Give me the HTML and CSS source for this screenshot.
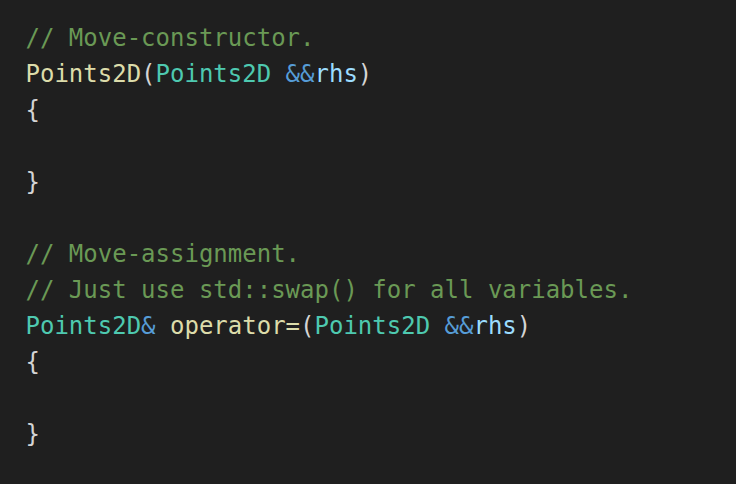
FILE: index.html
```html
<!DOCTYPE html>
<html>
<head>
<meta charset="utf-8">
<link rel="stylesheet" href="styles.css">
</head>
<body>
<pre class="code"><span class="cm">// Move-constructor.</span>
<span class="fn">Points2D</span><span class="pn">(</span><span class="ty">Points2D</span> <span class="kw">&amp;&amp;</span><span class="var">rhs</span><span class="pn">)</span>
<span class="pn">{</span>

<span class="pn">}</span>

<span class="cm">// Move-assignment.</span>
<span class="cm">// Just use std::swap() for all variables.</span>
<span class="ty">Points2D</span><span class="kw">&amp;</span> <span class="fn">operator=</span><span class="pn">(</span><span class="ty">Points2D</span> <span class="kw">&amp;&amp;</span><span class="var">rhs</span><span class="pn">)</span>
<span class="pn">{</span>

<span class="pn">}</span></pre>
</body>
</html>
```
FILE: styles.css
```css
html, body {
  margin: 0;
  padding: 0;
  background: #1f1f1f;
  height: 100%;
}
.code {
  margin: 0;
  padding: 20px 0 0 25.5px;
  font-family: "DejaVu Sans Mono", monospace;
  font-size: 24px;
  line-height: 36px;
  color: #d4d4d4;
}
.cm { color: #6a9955; }
.fn { color: #dcdcaa; }
.ty { color: #4ec9b0; }
.kw { color: #569cd6; }
.var { color: #9cdcfe; }
.pn { color: #d4d4d4; }
```
